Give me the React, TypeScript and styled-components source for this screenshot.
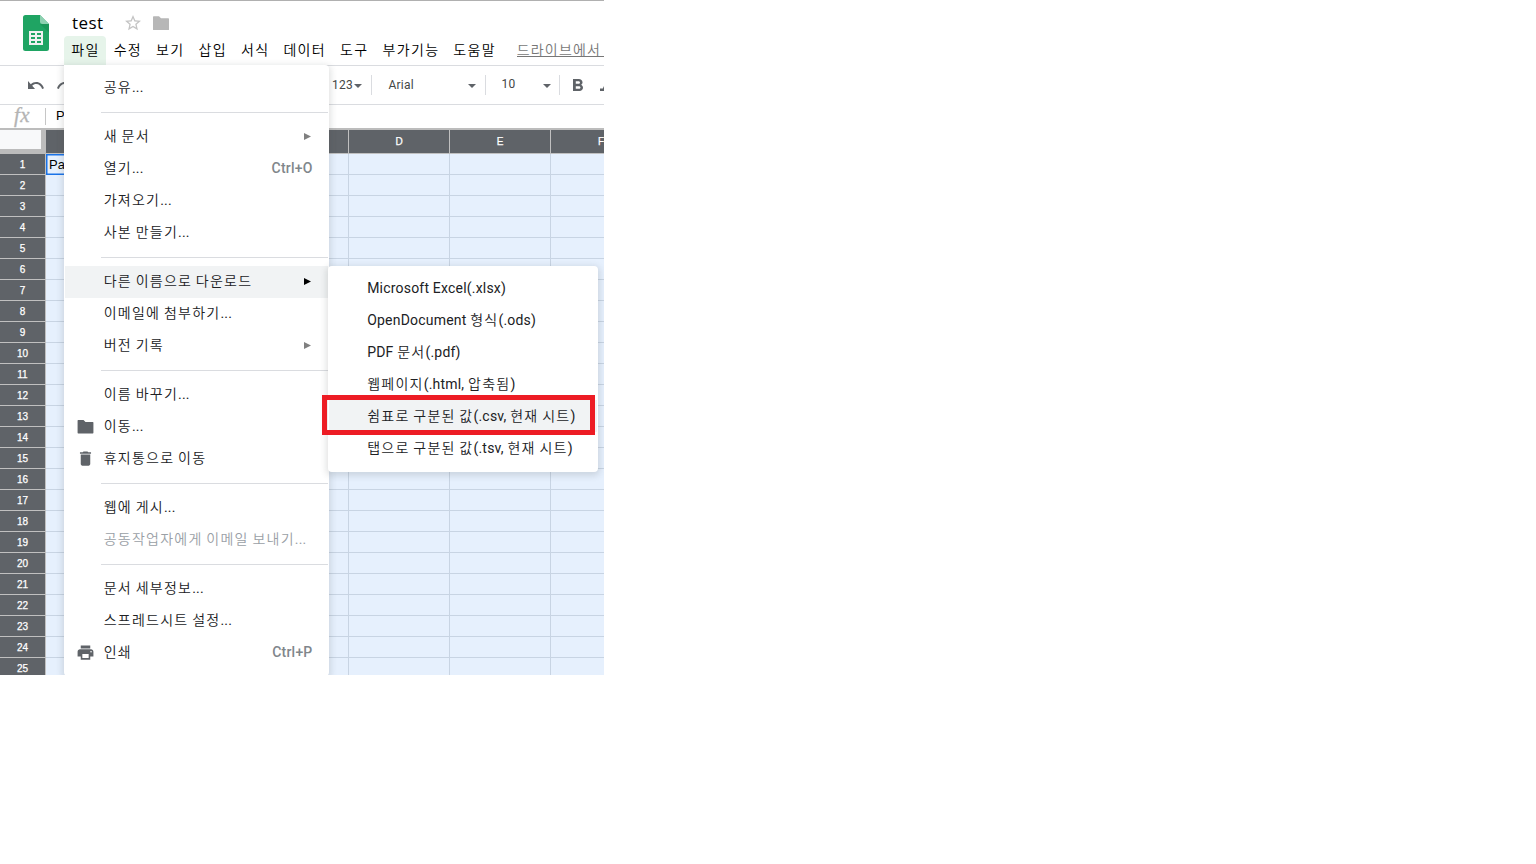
import React from 'react';
import styled, { createGlobalStyle } from 'styled-components';

const GlobalStyle = createGlobalStyle`
  * { box-sizing: border-box; }
  body { margin: 0; background: #fff; }
`;

const uiFont = `Roboto, 'Noto Sans CJK KR', sans-serif`;

const Window = styled.div`
  position: relative;
  width: 604px;
  height: 675px;
  overflow: hidden;
  border-top: 1px solid #b0b0b0;
  background: #fff;
  font-family: ${uiFont};
  color: #202124;
`;

const Header = styled.header`
  display: flex;
  height: 65px;
  padding-left: 23px;
  border-bottom: 1px solid #dadce0;
`;

const Logo = styled.svg`
  flex: none;
  width: 26px;
  height: 36px;
  margin-top: 14px;
`;

const HeaderMain = styled.div`
  flex: none;
  width: 600px;
  margin-left: 15px;
`;

const TitleRow = styled.div`
  display: flex;
  align-items: center;
  height: 35px;
  padding: 8px 0 0 8px;
`;

const Title = styled.span`
  width: 53px;
  font: 17px/24px 'Open Sans', sans-serif;
  letter-spacing: 0.4px;
  color: #000;
`;

const TitleIcon = styled.svg<{ $gap?: number }>`
  width: 16px;
  height: 16px;
  margin-right: ${(p) => p.$gap ?? 0}px;
`;

const MenuBar = styled.nav`
  display: flex;
  height: 29px;
`;

const MenuBarItem = styled.span<{ $open?: boolean }>`
  flex: none;
  height: 29px;
  padding: 0 6.8px 0 7.2px;
  border-radius: 4px 4px 0 0;
  background: ${(p) => (p.$open ? '#e6f4ea' : 'transparent')};
  font-size: 14px;
  line-height: 29px;
  white-space: nowrap;
  color: #000;
`;

const SaveNote = styled.span`
  margin-left: 14px;
  padding-top: 3px;
  height: 21px;
  border-bottom: 1px solid #777;
  font-size: 14px;
  line-height: 22px;
  white-space: pre;
  color: #777;
`;

const Hangul = styled.span<{ $track: number }>`
  font-weight: 350;
  letter-spacing: ${(p) => p.$track}px;
`;

const Toolbar = styled.div`
  display: flex;
  align-items: center;
  height: 39px;
  padding-left: 28px;
  border-bottom: 1px solid #dadce0;
  color: #5f6368;
  font-size: 12px;
`;

const ToolIcon = styled.svg<{ $w: number; $h: number; $gap?: number }>`
  flex: none;
  width: ${(p) => p.$w}px;
  height: ${(p) => p.$h}px;
  margin-right: ${(p) => p.$gap ?? 0}px;
`;

const ToolText = styled.span<{ $w: number; $lift?: number }>`
  flex: none;
  width: ${(p) => p.$w}px;
  padding-bottom: ${(p) => p.$lift ?? 0}px;
  letter-spacing: 0.2px;
  color: #444746;
`;

const Caret = styled.span`
  flex: none;
  margin-top: 2px;
  border: 4px solid transparent;
  border-top-color: #5f6368;
  border-bottom: 0;
`;

const ToolDivider = styled.span<{ $left: number; $right: number }>`
  flex: none;
  width: 1px;
  height: 20px;
  margin: 0 ${(p) => p.$right}px 0 ${(p) => p.$left}px;
  background: #dadce0;
`;

const FormulaBar = styled.div`
  display: flex;
  align-items: center;
  height: 23px;
`;

const Fx = styled.span`
  width: 45px;
  padding: 0 0 2px 14px;
  font: italic 21px/21px 'Liberation Serif', serif;
  letter-spacing: 0.5px;
  color: #b4b4b4;
  -webkit-text-stroke: 0.3px #b4b4b4;
`;

const FormulaValue = styled.span`
  height: 17px;
  padding-left: 10px;
  border-left: 1px solid #c6c6c6;
  font: 13px/16px 'Liberation Sans', sans-serif;
  color: #000;
`;

const Sheet = styled.div`
  border-top: 2px solid #bcbcbc;
`;

const SheetRow = styled.div<{ $height: number }>`
  display: flex;
  height: ${(p) => p.$height}px;
`;

const Corner = styled.div`
  flex: none;
  width: 46px;
  border: solid #bcbcbc;
  border-width: 0 5px 5px 0;
  background: #f8f9fa;
`;

const HeadCell = styled.div<{ $width: number; $line: number }>`
  flex: none;
  width: ${(p) => p.$width}px;
  border: solid #c0c0c0;
  border-width: 0 1px 1px 0;
  background: #5f6368;
  color: #fff;
  font: 10px/${(p) => p.$line}px 'Liberation Sans', sans-serif;
  -webkit-text-stroke: 0.25px #fff;
  text-align: center;
`;

const Cell = styled.div<{ $active?: boolean }>`
  flex: none;
  width: 101px;
  padding-left: 3px;
  border: solid #c8d4e3;
  border-width: 0 1px 1px 0;
  background: #e6f0fd;
  font: 13px/21px 'Liberation Sans', sans-serif;
  color: #000;
  ${(p) => p.$active && 'border: 1px solid #1a73e8; padding-left: 2px; line-height: 19px; box-shadow: inset 0 0 0 0.5px #1a73e8;'}
`;

const Popup = styled.div<{ $x: number; $y: number; $width: number; $top: number; $bottom: number }>`
  position: absolute;
  left: ${(p) => p.$x}px;
  top: ${(p) => p.$y}px;
  width: ${(p) => p.$width}px;
  padding: ${(p) => p.$top}px 1px ${(p) => p.$bottom}px;
  border-radius: ${(p) => (p.$y < 100 ? '0 4px 4px 4px' : '4px')};
  background: #fff;
  box-shadow: 0 2px 6px 2px rgba(60, 64, 67, 0.15);
`;

const Item = styled.div<{ $active?: boolean; $disabled?: boolean; $line: number }>`
  display: flex;
  align-items: center;
  height: 32px;
  padding-right: 15.5px;
  background: ${(p) => (p.$active ? '#f1f3f4' : 'transparent')};
  color: ${(p) => (p.$disabled ? '#9aa0a6' : '#202124')};
  font-size: 14px;
  line-height: ${(p) => p.$line}px;
  letter-spacing: 0.2px;
  white-space: nowrap;
`;

const IconSlot = styled.span<{ $nudge: number }>`
  display: flex;
  flex: none;
  width: ${(p) => 38 + p.$nudge}px;
  padding: 0 0 1px 11px;
  color: #5f6368;
`;

const ItemText = styled.span`
  flex: 1;
  height: 32px;
`;

const Shortcut = styled.span`
  height: 32px;
  font-weight: 500;
  color: #80868b;
  letter-spacing: 0.2px;
`;

const SubArrow = styled.svg<{ $active?: boolean }>`
  flex: none;
  width: 7px;
  height: 7px;
  margin: 0 1.5px 1px 0;
  fill: ${(p) => (p.$active ? '#000' : '#808080')};
`;

const Separator = styled.div`
  height: 1px;
  margin: 8px 0 8px 36px;
  background: #dadce0;
`;

const Highlight = styled.div`
  position: absolute;
  left: 322px;
  top: 394px;
  width: 273px;
  height: 40px;
  border: 5px solid #ed1c24;
`;

function Label({ text, track = 1.25 }: { text: string; track?: number }) {
  return (
    <>
      {text.split(/([가-힣]+)/).map((part, i) =>
        i % 2 ? <Hangul key={i} $track={track}>{part}</Hangul> : part,
      )}
    </>
  );
}

const FOLDER = 'M2 4.500q0-.8.8-.8H9.500l2.500 2.500h9.200q.8 0 .8.8v13q0 .8-.8.8H2.800q-.8 0-.8-.8z';
const icons: Record<string, string> = {
  folder: FOLDER,
  trash: 'M6 19c0 1.1.9 2 2 2h8c1.1 0 2-.9 2-2V7H6v12zM19 4h-3.5l-1-1h-5l-1 1H5v2h14V4z',
  print:
    'M19 8H5c-1.66 0-3 1.34-3 3v6h4v4h12v-4h4v-6c0-1.66-1.34-3-3-3zm-3 11H8v-5h8v5zm3-7c-.55 0-1-.45-1-1s.45-1 1-1 1 .45 1 1-.45 1-1 1zm-1-9H6v4h12V3z',
};

type Entry = {
  text: string;
  icon?: string;
  shortcut?: string;
  sub?: boolean;
  active?: boolean;
  disabled?: boolean;
};

const fileMenu: Entry[][] = [
  [{ text: '공유...' }],
  [
    { text: '새 문서', sub: true },
    { text: '열기...', shortcut: 'Ctrl+O' },
    { text: '가져오기...' },
    { text: '사본 만들기...' },
  ],
  [
    { text: '다른 이름으로 다운로드', sub: true, active: true },
    { text: '이메일에 첨부하기...' },
    { text: '버전 기록', sub: true },
  ],
  [
    { text: '이름 바꾸기...' },
    { text: '이동...', icon: 'folder' },
    { text: '휴지통으로 이동', icon: 'trash' },
  ],
  [{ text: '웹에 게시...' }, { text: '공동작업자에게 이메일 보내기...', disabled: true }],
  [
    { text: '문서 세부정보...' },
    { text: '스프레드시트 설정...' },
    { text: '인쇄', icon: 'print', shortcut: 'Ctrl+P' },
  ],
];

const downloadMenu: Entry[] = [
  { text: 'Microsoft Excel(.xlsx)' },
  { text: 'OpenDocument 형식(.ods)' },
  { text: 'PDF 문서(.pdf)' },
  { text: '웹페이지(.html, 압축됨)' },
  { text: '쉼표로 구분된 값(.csv, 현재 시트)', active: true },
  { text: '탭으로 구분된 값(.tsv, 현재 시트)' },
];

const menuTitles = ['파일', '수정', '보기', '삽입', '서식', '데이터', '도구', '부가기능', '도움말'];
const columns = ['A', 'B', 'C', 'D', 'E', 'F'];
const rows = Array.from({ length: 25 }, (_, i) => i + 1);

function MenuItem({ entry, line, nudge = 0 }: { entry: Entry; line: number; nudge?: number }) {
  return (
    <Item $active={entry.active} $disabled={entry.disabled} $line={line}>
      <IconSlot $nudge={nudge}>
        {entry.icon && (
          <svg width="19" height="19" viewBox="0 0 24 24" fill="currentColor">
            <path d={icons[entry.icon]} />
          </svg>
        )}
      </IconSlot>
      <ItemText><Label text={entry.text} /></ItemText>
      {entry.shortcut && <Shortcut>{entry.shortcut}</Shortcut>}
      {entry.sub && (
        <SubArrow $active={entry.active} viewBox="0 0 7 7">
          <path d="M0 0l7 3.500L0 7z" />
        </SubArrow>
      )}
    </Item>
  );
}

export default function App() {
  return (
    <Window>
      <GlobalStyle />
      <Header>
        <Logo viewBox="0 0 26 36">
          <path d="M2.5 0H17l9 9v24.5a2.5 2.5 0 0 1-2.5 2.5h-21A2.5 2.5 0 0 1 0 33.500v-31A2.5 2.5 0 0 1 2.500 0z" fill="#1fa463" />
          <path d="M17 9h9v8.500z" fill="#178a50" opacity=".5" />
          <path d="M17 0l9 9h-6.500A2.500 2.500 0 0 1 17 6.500z" fill="#8ed1b1" />
          <path d="M6 16h14v14H6z" fill="#f1f1f1" />
          <path d="M8 18h4v2H8zM14 18h4v2h-4zM8 22h4v2H8zM14 22h4v2h-4zM8 26h4v2H8zM14 26h4v2h-4z" fill="#1fa463" />
        </Logo>
        <HeaderMain>
          <TitleRow>
            <Title>test</Title>
            <TitleIcon viewBox="2 2 20 20" $gap={12}>
              <path
                fill="#c4c4c4"
                d="M22 9.240l-7.190-.62L12 2 9.190 8.630 2 9.240l5.460 4.730L5.820 21 12 17.270 18.180 21l-1.630-7.030L22 9.240zM12 15.400l-3.760 2.270 1-4.280-3.320-2.880 4.380-.38L12 6.100l1.710 4.040 4.380.38-3.320 2.880 1 4.280L12 15.400z"
              />
            </TitleIcon>
            <TitleIcon viewBox="2 2 20 20"><path fill="#b7b7b7" d={FOLDER} /></TitleIcon>
          </TitleRow>
          <MenuBar>
            {menuTitles.map((title, i) => (
              <MenuBarItem key={title} $open={i === 0}><Label text={title} track={1.34} /></MenuBarItem>
            ))}
            <SaveNote><Label text="드라이브에서 " track={1.15} /></SaveNote>
          </MenuBar>
        </HeaderMain>
      </Header>

      <Toolbar>
        <ToolIcon $w={16} $h={8} $gap={13} viewBox="2 7 20.500 9" preserveAspectRatio="none">
          <path fill="#5f6368" d="M12.500 8c-2.650 0-5.050.99-6.900 2.600L2 7v9h9l-3.620-3.620c1.390-1.160 3.160-1.880 5.120-1.880 3.540 0 6.550 2.310 7.600 5.500l2.370-.78C21.080 11.030 17.150 8 12.500 8z" />
        </ToolIcon>
        <ToolIcon $w={16} $h={8} $gap={259} viewBox="1.500 7 20.500 9" preserveAspectRatio="none">
          <path fill="#5f6368" d="M18.400 10.600C16.550 8.990 14.150 8 11.500 8c-4.650 0-8.580 3.030-9.960 7.220L3.900 16c1.050-3.190 4.050-5.500 7.600-5.500 1.950 0 3.730.72 5.120 1.880L13 16h9V7l-3.600 3.600z" />
        </ToolIcon>
        <ToolText $w={22}>123</ToolText>
        <Caret />
        <ToolDivider $left={9} $right={16.500} />
        <ToolText $w={79.500}>Arial</ToolText>
        <Caret />
        <ToolDivider $left={9} $right={15.500} />
        <ToolText $w={41.500} $lift={2}>10</ToolText>
        <Caret />
        <ToolDivider $left={8} $right={13} />
        <ToolIcon $w={10} $h={12} $gap={17} viewBox="7 4 10.750 14" preserveAspectRatio="none">
          <path fill="#5f6368" d="M15.600 10.790c.97-.67 1.650-1.770 1.650-2.790 0-2.260-1.750-4-4-4H7v14h7.040c2.090 0 3.710-1.700 3.710-3.790 0-1.520-.86-2.820-2.150-3.420zM10 6.500h3c.83 0 1.500.67 1.500 1.500s-.67 1.500-1.500 1.500h-3v-3zm3.500 9H10v-3h3.500c.83 0 1.500.67 1.500 1.500s-.67 1.500-1.500 1.500z" />
        </ToolIcon>
        <ToolIcon $w={12} $h={12} viewBox="6 4 12 14" preserveAspectRatio="none">
          <path fill="#5f6368" d="M10 4v3h2.210l-3.420 8H6v3h8v-3h-2.210l3.420-8H18V4z" />
        </ToolIcon>
      </Toolbar>

      <FormulaBar>
        <Fx>fx</Fx>
        <FormulaValue>Pa</FormulaValue>
      </FormulaBar>

      <Sheet>
        <SheetRow $height={24}>
          <Corner />
          {columns.map((c) => <HeadCell key={c} $width={101} $line={24}>{c}</HeadCell>)}
        </SheetRow>
        {rows.map((n) => (
          <SheetRow key={n} $height={21}>
            <HeadCell $width={46} $line={22}>{n}</HeadCell>
            {columns.map((c) => (
              <Cell key={c} $active={n === 1 && c === 'A'}>{n === 1 && c === 'A' ? 'Pa' : ''}</Cell>
            ))}
          </SheetRow>
        ))}
      </Sheet>

      <Popup $x={64} $y={64} $width={265} $top={7} $bottom={7}>
        {fileMenu.map((group, i) => (
          <React.Fragment key={i}>
            {i > 0 && <Separator />}
            {group.map((entry) => <MenuItem key={entry.text} entry={entry} line={30} nudge={0.7} />)}
          </React.Fragment>
        ))}
      </Popup>
      <Popup $x={328} $y={265} $width={270} $top={6} $bottom={8}>
        {downloadMenu.map((entry) => <MenuItem key={entry.text} entry={entry} line={32} nudge={0.2} />)}
      </Popup>
      <Highlight />
    </Window>
  );
}
